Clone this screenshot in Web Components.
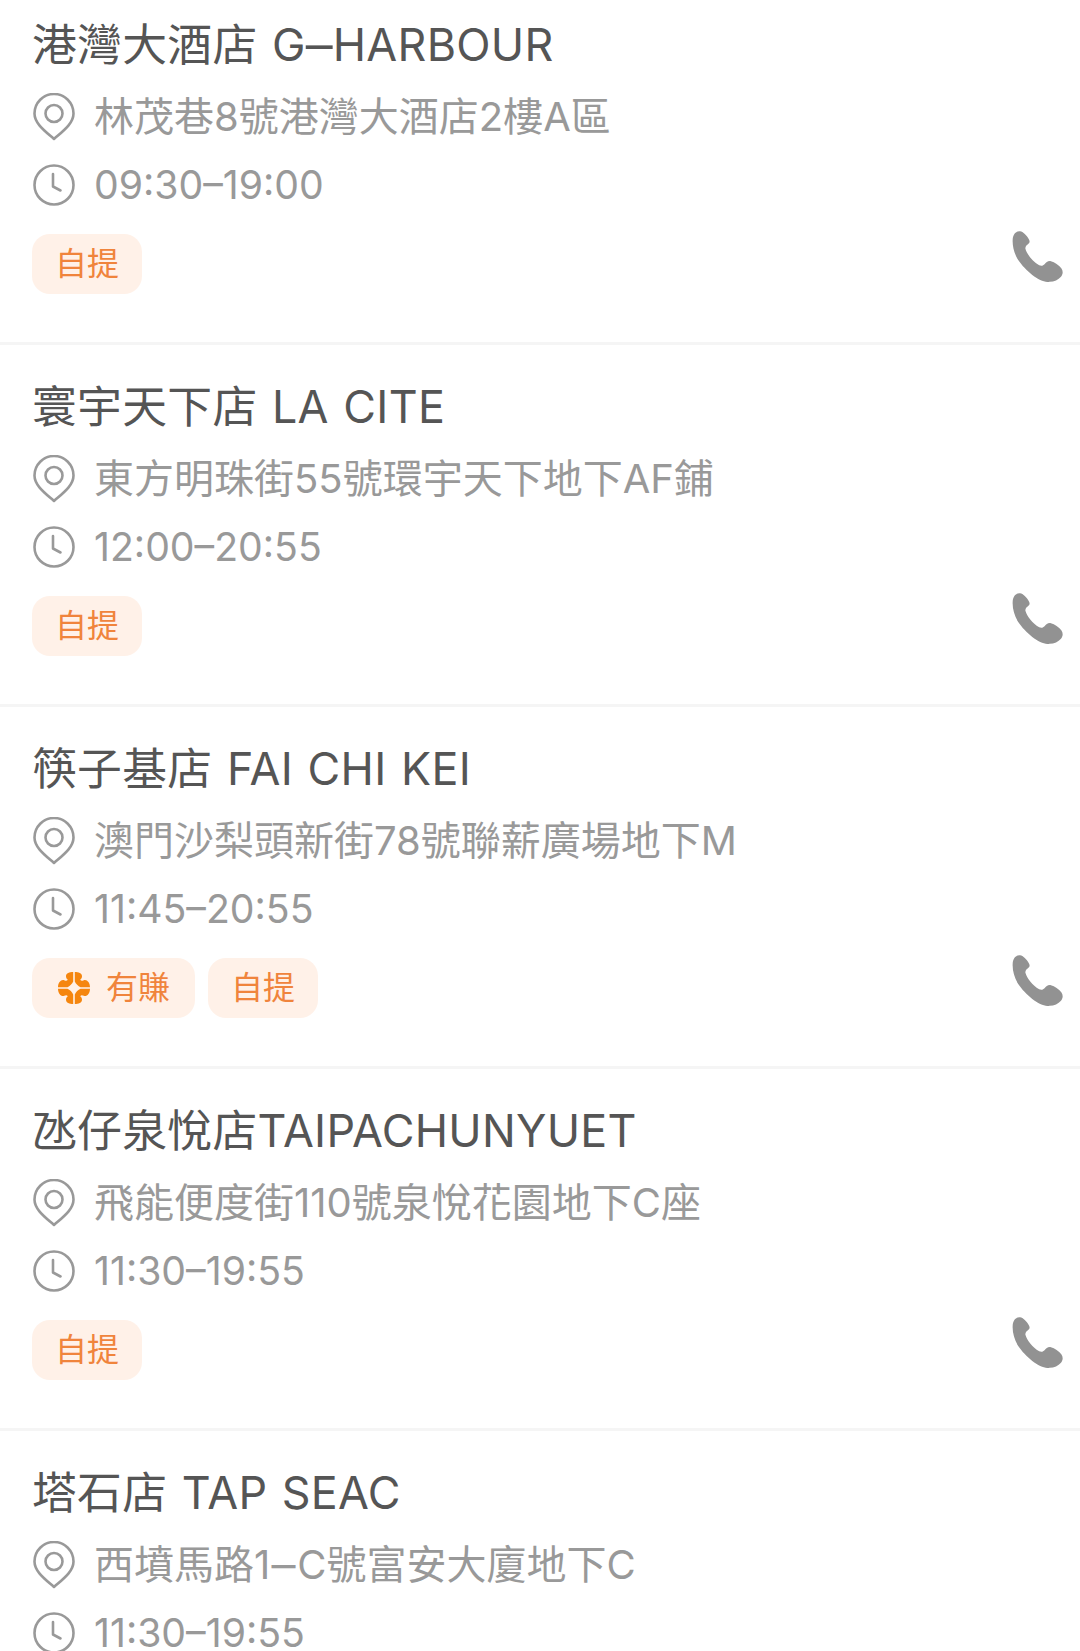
<!DOCTYPE html>
<html>
<head>
<meta charset="utf-8">
<title>Stores</title>
<style>
  html, body { margin: 0; background: #fff; }
  body { height: 1651px; overflow: hidden; font-family: Inter, "Noto Sans CJK TC", sans-serif; }
</style>
</head>
<body>
<store-list>
  <store-row name="港灣大酒店 G–HARBOUR" address="林茂巷8號港灣大酒店2樓A區" hours="09:30–19:00">
    <store-tag>自提</store-tag>
  </store-row>
  <store-row name="寰宇天下店 LA CITE" address="東方明珠街55號環宇天下地下AF鋪" hours="12:00–20:55">
    <store-tag>自提</store-tag>
  </store-row>
  <store-row name="筷子基店 FAI CHI KEI" address="澳門沙梨頭新街78號聯薪廣場地下M" hours="11:45–20:55">
    <store-tag earn>有賺</store-tag>
    <store-tag>自提</store-tag>
  </store-row>
  <store-row name="氹仔泉悅店TAIPACHUNYUET" address="飛能便度街110號泉悅花園地下C座" hours="11:30–19:55">
    <store-tag>自提</store-tag>
  </store-row>
  <store-row name="塔石店 TAP SEAC" address="西墳馬路1–C號富安大廈地下C" hours="11:30–19:55">
    <store-tag>自提</store-tag>
  </store-row>
</store-list>

<script>
class StoreList extends HTMLElement {
  constructor() {
    super();
    this.attachShadow({ mode: 'open' });
  }

  connectedCallback() {
    // the list is scrolled a little: the first row starts above the window
    this.shadowRoot.innerHTML = `
      <style>
        :host { display: flex; flex-direction: column; margin-top: -17px; }
      </style>
      <slot></slot>
    `;
  }
}

// one corner of the flower, mirrored for the other three
const PETAL = 'M16.2 1C12.500 1 9 2 9 5.200c0 1.500.6 2.600 1.800 3.600-1 1.400-2.200 1.100-3.600.4C4.500 8 1 11 1 16.200h9.500c2.200-.9 4.800-3.500 5.700-5.700z';

class StoreTag extends HTMLElement {
  constructor() {
    super();
    this.attachShadow({ mode: 'open' });
  }

  connectedCallback() {
    const petals = ['', 'matrix(-1 0 0 1 34 0)', 'matrix(1 0 0 -1 0 34)', 'matrix(-1 0 0 -1 34 34)']
      .map((m) => `<path d="${PETAL}" transform="${m}"/>`).join('');
    const flower = this.hasAttribute('earn')
      ? `<svg width="34" height="34" viewBox="0 0 34 34" fill="#f5860f">${petals}</svg>`
      : '';
    this.shadowRoot.innerHTML = `
      <style>
        :host {
          display: inline-flex;
          align-items: center;
          gap: 15px;
          height: 60px;
          padding: 0 23px;
          box-sizing: border-box;
          border-radius: 18px;
          background: #fff1e8;
          color: #f0843c;
          font-size: 32px;
          line-height: 1;
        }
        :host([earn]) { padding: 0 25px; }
        svg { flex: none; }
      </style>
      ${flower}<slot></slot>
    `;
  }
}

// the en dash of the reference's font is longer than Inter's
const wideDash = (text) => text.replace('–', '<span class="dash">–</span>');

class StoreRow extends HTMLElement {
  constructor() {
    super();
    this.attachShadow({ mode: 'open' });
  }

  connectedCallback() {
    this.shadowRoot.innerHTML = `
      <style>
        :host {
          display: block;
          height: 362px;
          box-sizing: border-box;
          padding: 34px 16px 0 32px;
          border-bottom: 3px solid #f5f5f5;
          color: #999;
        }
        .name {
          font-size: 44.8px;
          letter-spacing: .3px;
          word-spacing: 1.6px;
          line-height: 56px;
          height: 56px;
          color: #555;
        }
        .line {
          display: flex;
          align-items: center;
          gap: 19px;
          font-size: 40px;
          line-height: 48px;
          height: 48px;
        }
        .address { margin-top: 20px; }
        .dash {
          display: inline-block;
          width: 27px;
          text-align: center;
          transform: scaleX(1.200);
        }
        .hours { margin-top: 20px; font-size: 39.2px; }
        .line svg { flex: none; margin-left: 1px; }
        .bottom {
          display: flex;
          justify-content: space-between;
          align-items: center;
          margin-top: 25px;
        }
        .tags { display: flex; gap: 13px; }
        .phone { margin-top: -15px; display: block; }
      </style>
      <div class="name">${wideDash(this.getAttribute('name'))}</div>
      <div class="line address">
        <svg width="42" height="48" viewBox="0 0 42 48" fill="none" stroke="#999" stroke-width="2.600">
          <path d="M21 46C12 38 1.500 30.500 1.500 20.500a19.500 19.500 0 0 1 39 0C40.500 30.500 30 38 21 46z" stroke-linejoin="round"/>
          <circle cx="21" cy="20.500" r="8.500"/>
        </svg>
        <span>${wideDash(this.getAttribute('address'))}</span>
      </div>
      <div class="line hours">
        <svg width="42" height="42" viewBox="0 0 42 42" fill="none" stroke="#999" stroke-width="2.600">
          <circle cx="21" cy="21" r="19.500"/>
          <path d="M20 10v12.500l7.500 4" stroke-linecap="round" stroke-linejoin="round"/>
        </svg>
        <span>${this.getAttribute('hours')}</span>
      </div>
      <div class="bottom">
        <div class="tags"><slot></slot></div>
        <svg class="phone" width="52" height="52" viewBox="0 0 155 155" fill="#929292">
          <path d="M2 26C3 8 13 0 24 1c9 1 20 12 27 25 3 6 1 10-3 13-5 4-9 8-8 14 4 15 21 38 41 49 7 3 12 1 16-3 5-5 10-11 19-9 11 3 24 11 31 21 6 8 5 18-1 25-8 9-20 15-34 15C88 158 42 122 18 86 6 66 1 44 2 26z"/>
        </svg>
      </div>
    `;
  }
}

customElements.define('store-list', StoreList);
customElements.define('store-tag', StoreTag);
customElements.define('store-row', StoreRow);
</script>
</body>
</html>
